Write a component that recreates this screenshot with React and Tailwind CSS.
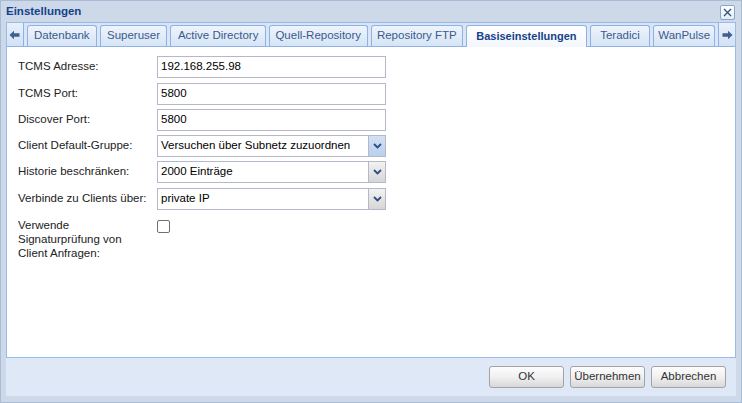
import React from "react";

const font = { fontFamily: '"Liberation Sans", Arial, sans-serif' };

function Arrow({ dir }) {
  return (
    <svg width="11" height="10" viewBox="0 0 11 10" className={dir === "right" ? "rotate-180" : ""}>
      <path d="M0.5 5 L5 0.8 L5 3.3 L10.5 3.3 L10.5 6.7 L5 6.7 L5 9.2 Z" fill="#3f5f8e" />
    </svg>
  );
}

function Tab({ label, w, active }) {
  if (active) {
    return (
      <div
        className={`${w} h-[22px] -mb-[1px] relative z-10 flex items-center justify-center border border-b-0 border-[#8db2e3] rounded-t-[3px] bg-gradient-to-b from-white to-[#f3f7fd] text-[11px] font-bold text-[#15428b]`}
      >
        {label}
      </div>
    );
  }
  return (
    <div
      className={`${w} h-[21px] flex items-center justify-center border border-b-0 border-[#8db2e3] rounded-t-[3px] bg-gradient-to-b from-[#eef4fc] to-[#d6e4f6] text-[11.5px] text-[#3a5b8c]`}
    >
      {label}
    </div>
  );
}

function TextField({ value }) {
  return (
    <div className="w-[229px] h-[22px] border border-[#b5b8c8] bg-white flex items-center px-[3px] text-[11.5px] text-black">
      {value}
    </div>
  );
}

function Combo({ value, focus }) {
  return (
    <div className="w-[229px] h-[22px] border border-[#b5b8c8] bg-white flex items-stretch text-[11.5px] text-black">
      <div className="flex-1 flex items-center px-[3px]">{value}</div>
      <div
        className={`w-[17px] border-l border-[#b5b8c8] flex items-center justify-center ${
          focus
            ? "bg-gradient-to-b from-[#d3e2f5] to-[#b9cfec]"
            : "bg-gradient-to-b from-[#f2f2f2] to-[#d6d6d6]"
        }`}
      >
        <svg width="9" height="6" viewBox="0 0 9 6">
          <path d="M1 1 L4.5 4.5 L8 1" stroke="#2d4e85" strokeWidth="1.8" fill="none" />
        </svg>
      </div>
    </div>
  );
}

function Row({ label, children, mt }) {
  return (
    <div className={`flex items-center ${mt}`}>
      <div className="w-[139px] text-[11.5px] text-[#222]">{label}</div>
      {children}
    </div>
  );
}

function Btn({ label }) {
  return (
    <div className="w-[75px] h-[22px] border border-[#a3a3a3] rounded-[3px] bg-gradient-to-b from-[#fdfdfd] via-[#f0f0f0] to-[#d8d8d8] flex items-center justify-center text-[11.5px] text-[#333]">
      {label}
    </div>
  );
}

export default function App() {
  return (
    <div style={font} className="w-[742px] h-[403px] border border-[#a8bcd6] bg-[#cdd9e8] flex flex-col overflow-hidden">
      {/* header */}
      <div className="h-[21px] flex items-center justify-between pl-[5px] pr-[6px]">
        <span className="text-[11.5px] font-bold text-[#15428b]">Einstellungen</span>
        <div className="w-[15px] h-[15px] mt-[2px] border border-[#8aa6cc] rounded-[2px] bg-gradient-to-b from-white to-[#e4ecf7] flex items-center justify-center">
          <svg width="9" height="9" viewBox="0 0 9 9">
            <path d="M1 1 L8 8 M8 1 L1 8" stroke="#33507e" strokeWidth="1.3" />
          </svg>
        </div>
      </div>

      {/* body */}
      <div className="mx-[5px] h-[374px] bg-[#dfe8f6] flex flex-col">
        {/* tab panel */}
        <div className="h-[336px] border border-[#99bbe8] flex flex-col">
          {/* strip */}
          <div className="h-[24px] bg-gradient-to-b from-[#d8e4f3] to-[#dce8f7] border-b border-[#8db2e3] flex items-end gap-[3px]">
            <div className="w-[17px] h-[23px] border-r border-[#8db2e3] bg-gradient-to-b from-[#e8f0fb] to-[#d2e1f4] flex items-center justify-center">
              <Arrow dir="left" />
            </div>
            <Tab label="Datenbank" w="w-[70px]" />
            <Tab label="Superuser" w="w-[68px]" />
            <Tab label="Active Directory" w="w-[96px]" />
            <Tab label="Quell-Repository" w="w-[99px]" />
            <Tab label="Repository FTP" w="w-[93px]" />
            <Tab label="Basiseinstellungen" w="w-[121px]" active />
            <Tab label="Teradici" w="w-[61px]" />
            <Tab label="WanPulse" w="w-[62px]" />
            <div className="ml-auto w-[17px] h-[23px] border-l border-[#8db2e3] bg-gradient-to-b from-[#e8f0fb] to-[#d2e1f4] flex items-center justify-center">
              <Arrow dir="right" />
            </div>
          </div>

          {/* content */}
          <div className="flex-1 bg-white pl-[11px] pt-[9px] flex flex-col">
            <Row label="TCMS Adresse:">
              <TextField value="192.168.255.98" />
            </Row>
            <Row label="TCMS Port:" mt="mt-[5px]">
              <TextField value="5800" />
            </Row>
            <Row label="Discover Port:" mt="mt-[4px]">
              <TextField value="5800" />
            </Row>
            <Row label="Client Default-Gruppe:" mt="mt-[4px]">
              <Combo value="Versuchen über Subnetz zuzuordnen" focus />
            </Row>
            <Row label="Historie beschränken:" mt="mt-[4px]">
              <Combo value="2000 Einträge" />
            </Row>
            <Row label="Verbinde zu Clients über:" mt="mt-[5px]">
              <Combo value="private IP" />
            </Row>
            <div className="flex items-start mt-[8px]">
              <div className="w-[139px] text-[11.5px] leading-[14px] text-[#222]">
                Verwende
                <br />
                Signaturprüfung von
                <br />
                Client Anfragen:
              </div>
              <div className="w-[13px] h-[13px] mt-[2px] border border-[#6f6f6f] rounded-[2px] bg-white" />
            </div>
          </div>
        </div>

        {/* footer */}
        <div className="flex-1 flex justify-end items-start pt-[8px] pr-[10px] gap-[6px]">
          <Btn label="OK" />
          <Btn label="Übernehmen" />
          <Btn label="Abbrechen" />
        </div>
      </div>
    </div>
  );
}
